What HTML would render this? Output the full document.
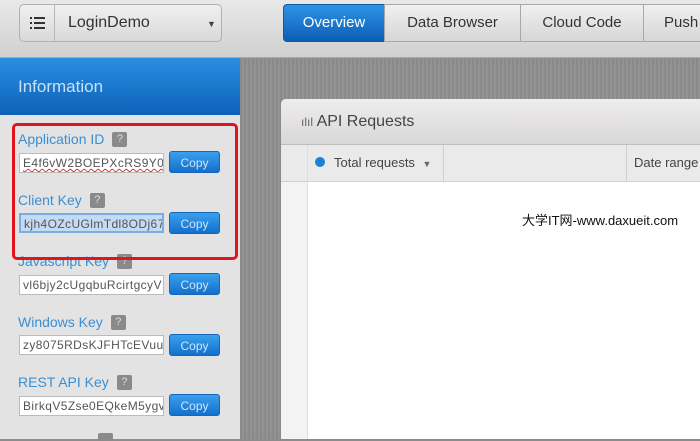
<!DOCTYPE html>
<html><head><meta charset="utf-8"><style>
*{margin:0;padding:0;box-sizing:border-box}
body{width:700px;height:439px;overflow:hidden;position:relative;font-family:"Liberation Sans","Noto Sans CJK SC",sans-serif;background:#8c8c8c}
.a{position:absolute}
#top{left:0;top:0;width:700px;height:58px;background:linear-gradient(#e9e9e9,#d0d0d0);border-bottom:1px solid #a9a9a9}
#dd{left:19px;top:4px;width:203px;height:38px;border:1px solid #b0b0b0;border-radius:5px;background:linear-gradient(#f0f0f0,#d9d9d9)}
.tab{top:4px;height:38px;border:1px solid #a8a8a8;background:linear-gradient(#f0f0f0,#d6d6d6);color:#333;font-size:15px;line-height:36px;text-align:center}
#side{left:0;top:58px;width:240px;height:381px;background:#e3e3e3}
#sh{left:0;top:58px;width:240px;height:57px;background:linear-gradient(#2a8ee0,#0d62b8);color:#c8e0f7;font-size:17px;line-height:57px;padding-left:18px}
#right{left:240px;top:58px;width:460px;height:381px;background:repeating-linear-gradient(90deg,#8a8a8a 0 2px,#939393 2px 4px)}
#panel{left:281px;top:99px;width:419px;height:340px;background:#fff;border-radius:5px 0 0 0}
#ph{left:281px;top:99px;width:419px;height:46px;background:linear-gradient(#eeeded,#d9d7d7);border-radius:5px 0 0 0;border-bottom:1px solid #bdbdbd;color:#444;font-size:16px;line-height:46px;padding-left:20px}
#sub{left:281px;top:145px;width:419px;height:37px;background:#eaeaea;border-bottom:1px solid #d2d2d2}
.lab{left:18px;color:#3b8fd3;font-size:14px}
.q{display:inline-block;width:15px;height:15px;background:#8a8a8a;color:#ddd;font-size:11px;line-height:15px;text-align:center;border-radius:2px;margin-left:8px;vertical-align:2px}
.in{left:19px;width:145px;height:20px;background:#fff;border:1px solid #bbb;font-size:12px;color:#555;line-height:18px;padding-left:3px;overflow:hidden;white-space:nowrap;letter-spacing:.4px}
.cp{left:169px;width:51px;height:22px;border-radius:3px;background:linear-gradient(#3aa0ee,#136fcc);color:#cfe6fb;font-size:12px;line-height:22px;text-align:center;border:1px solid #1667b8}
</style></head><body>
<div class="a" id="top"></div>
<div class="a" id="dd"><div class="a" style="left:34px;top:0;width:1px;height:36px;background:#b8b8b8"></div>
<svg class="a" style="left:10px;top:11px" width="16" height="14"><g fill="#333"><rect x="0" y="1" width="2" height="2"/><rect x="4" y="1" width="11" height="2"/><rect x="0" y="6" width="2" height="2"/><rect x="4" y="6" width="11" height="2"/><rect x="0" y="11" width="2" height="2"/><rect x="4" y="11" width="11" height="2"/></g></svg>
<div class="a" style="left:48px;top:9px;font-size:16px;color:#333">LoginDemo</div>
<div class="a" style="left:187px;top:14px;font-size:9px;color:#444">▼</div></div>
<div class="a tab" style="left:283px;width:102px;background:linear-gradient(#2f93e6,#0a5fb6);color:#fff;border-color:#0c5aa5;border-radius:4px 0 0 4px">Overview</div>
<div class="a tab" style="left:384px;width:137px">Data Browser</div>
<div class="a tab" style="left:520px;width:124px">Cloud Code</div>
<div class="a tab" style="left:643px;width:70px;text-align:left;padding-left:20px">Push</div>
<div class="a" id="side"></div>
<div class="a" id="sh">Information</div>
<div class="a" id="right"></div>
<div class="a" id="panel"></div>
<div class="a" id="ph"><span style="font-size:12px;color:#666">ılıl</span> API Requests</div>
<div class="a" id="sub"></div>
<div class="a" style="left:307px;top:145px;width:1px;height:294px;background:#ddd"></div>
<div class="a" style="left:281px;top:182px;width:26px;height:257px;background:#f3f3f3"></div>
<div class="a" style="left:443px;top:145px;width:1px;height:37px;background:#d0d0d0"></div>
<div class="a" style="left:626px;top:145px;width:1px;height:37px;background:#d0d0d0"></div>
<div class="a" style="left:315px;top:157px;width:10px;height:10px;border-radius:50%;background:#1a80d8"></div>
<div class="a" style="left:334px;top:155px;font-size:13px;color:#444">Total requests <span style="font-size:9px;color:#666;margin-left:4px">▼</span></div>
<div class="a" style="left:634px;top:155px;font-size:13px;color:#444;white-space:nowrap">Date range</div>
<div class="a" style="left:522px;top:210px;font-size:13px;color:#111;white-space:nowrap">大学IT网-www.daxueit.com</div>

<div class="a lab" style="top:131px">Application ID<span class="q">?</span></div>
<div class="a in" style="top:153px;text-decoration:underline wavy #d33;text-decoration-thickness:1px">E4f6vW2BOEPXcRS9Y047</div>
<div class="a cp" style="top:151px">Copy</div>
<div class="a lab" style="top:192px">Client Key<span class="q">?</span></div>
<div class="a in" style="top:213px;border:2px solid #7aaee0;background:#c4dbf3">kjh4OZcUGlmTdl8ODj67</div>
<div class="a cp" style="top:212px">Copy</div>
<div class="a lab" style="top:253px">Javascript Key<span class="q">?</span></div>
<div class="a in" style="top:275px">vl6bjy2cUgqbuRcirtgcyV</div>
<div class="a cp" style="top:273px">Copy</div>
<div class="a lab" style="top:314px">Windows Key<span class="q">?</span></div>
<div class="a in" style="top:335px">zy8075RDsKJFHTcEVuuS</div>
<div class="a cp" style="top:334px">Copy</div>
<div class="a lab" style="top:374px">REST API Key<span class="q">?</span></div>
<div class="a in" style="top:396px">BirkqV5Zse0EQkeM5ygvl</div>
<div class="a cp" style="top:394px">Copy</div>
<div class="a" style="left:98px;top:433px;width:15px;height:8px;background:#8a8a8a;border-radius:2px"></div>
<div class="a" style="left:12px;top:123px;width:226px;height:137px;border:3px solid #e0141c;border-radius:5px"></div>
</body></html>
